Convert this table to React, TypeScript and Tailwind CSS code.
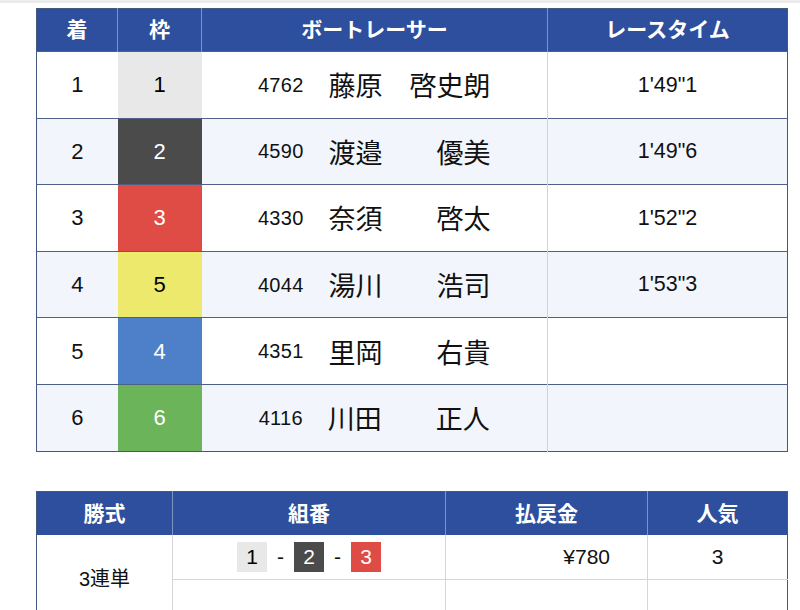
import React from 'react';

// 着順結果 + 払戻金テーブル

type Racer = {
    rank: number;
    frame: number;
    no: string;
    name: string;
    time: string;
};

const frameColor: Record<number, string> = {
    1: 'bg-[#e8e8e8] text-black',
    2: 'bg-[#4b4b4b] text-white',
    3: 'bg-[#df4b45] text-white',
    4: 'bg-[#4e7fc9] text-white',
    5: 'bg-[#ece96c] text-black',
    6: 'bg-[#6cb45a] text-white',
};

const racers: Racer[] = [
    { rank: 1, frame: 1, no: '4762', name: '藤原　啓史朗', time: `1'49"1` },
    { rank: 2, frame: 2, no: '4590', name: '渡邉　　優美', time: `1'49"6` },
    { rank: 3, frame: 3, no: '4330', name: '奈須　　啓太', time: `1'52"2` },
    { rank: 4, frame: 5, no: '4044', name: '湯川　　浩司', time: `1'53"3` },
    { rank: 5, frame: 4, no: '4351', name: '里岡　　右貴', time: '' },
    { rank: 6, frame: 6, no: '4116', name: '川田　　正人', time: '' },
];

const font = { fontFamily: '"Liberation Sans", "Noto Sans CJK JP", sans-serif' };

const Badge = ({ n }: { n: number }) => (
    <span className={`w-[30px] h-[30px] flex items-center justify-center text-[21px] ${frameColor[n]}`}>{n}</span>
);

export default function App() {
    return (
        <div className="w-[800px] min-h-[610px] bg-white text-[#111]" style={font}>
            <div className="h-[3px] bg-[#ebebeb]" />

            <div className="pl-[36px] pt-[5px]">
                {/* 着順 */}
                <table className="w-[751px] table-fixed border-collapse border border-[#44577f]">
                    <colgroup>
                        <col className="w-[81px]" />
                        <col className="w-[84px]" />
                        <col className="w-[346px]" />
                        <col className="w-[240px]" />
                    </colgroup>
                    <thead>
                        <tr className="h-[43px] bg-[#2d4f9d] text-white text-[21px]">
                            <th className="border-r border-[#7d93c4] font-bold">着</th>
                            <th className="border-r border-[#7d93c4] font-bold">枠</th>
                            <th className="border-r border-[#7d93c4] font-bold">ボートレーサー</th>
                            <th className="font-bold">レースタイム</th>
                        </tr>
                    </thead>
                    <tbody>
                        {racers.map((r, i) => (
                            <tr
                                key={r.rank}
                                className={`h-[66.6px] border-t border-[#4f6086] ${i % 2 === 1 ? 'bg-[#f2f5fc]' : 'bg-white'}`}
                            >
                                <td className="text-center text-[22px]">{r.rank}</td>
                                <td className={`text-center text-[22px] ${frameColor[r.frame]}`}>{r.frame}</td>
                                <td className="border-r border-[#cdd4e4]">
                                    <div className="flex items-center justify-center gap-[25px]">
                                        <span className="text-[20px] tracking-[0.3px]">{r.no}</span>
                                        <span className="text-[27px] leading-none whitespace-pre" style={{ fontFamily: '"Noto Sans CJK JP", sans-serif' }}>
                                            {r.name}
                                        </span>
                                    </div>
                                </td>
                                <td className="text-center text-[21.5px]">{r.time}</td>
                            </tr>
                        ))}
                    </tbody>
                </table>

                {/* 払戻金 */}
                <table className="mt-[39px] w-[751px] table-fixed border-collapse border border-[#44577f]">
                    <colgroup>
                        <col className="w-[136px]" />
                        <col className="w-[273px]" />
                        <col className="w-[202px]" />
                        <col className="w-[140px]" />
                    </colgroup>
                    <thead>
                        <tr className="h-[44px] bg-[#2d4f9d] text-white text-[21px]">
                            <th className="border-r border-[#7d93c4] font-bold">勝式</th>
                            <th className="border-r border-[#7d93c4] font-bold">組番</th>
                            <th className="border-r border-[#7d93c4] font-bold">払戻金</th>
                            <th className="font-bold">人気</th>
                        </tr>
                    </thead>
                    <tbody className="text-[21px]">
                        <tr className="h-[44px]">
                            <td rowSpan={2} className="text-center text-[20px] border-r border-[#d6d6d6]">3連単</td>
                            <td className="border-r border-b border-[#d6d6d6]">
                                <div className="flex items-center justify-center gap-[10px]">
                                    <Badge n={1} />
                                    <span>-</span>
                                    <Badge n={2} />
                                    <span>-</span>
                                    <Badge n={3} />
                                </div>
                            </td>
                            <td className="text-right pr-[37px] border-r border-b border-[#d6d6d6]">¥780</td>
                            <td className="text-center border-b border-[#d6d6d6]">3</td>
                        </tr>
                        <tr className="h-[44px]">
                            <td className="border-r border-[#d6d6d6]"></td>
                            <td className="border-r border-[#d6d6d6]"></td>
                            <td></td>
                        </tr>
                    </tbody>
                </table>
            </div>
        </div>
    );
}
